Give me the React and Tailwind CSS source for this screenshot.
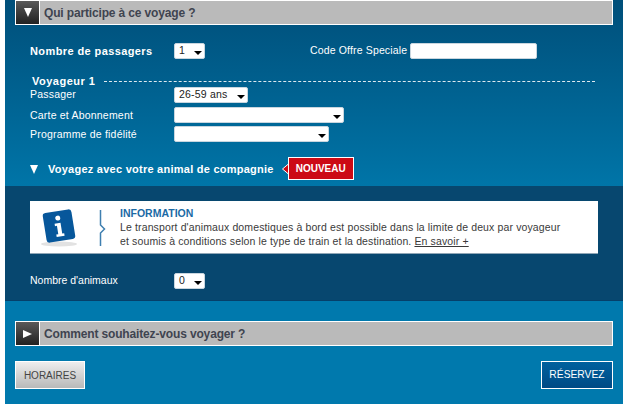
import React from 'react';

const SelectBox = ({ value, width, height = 'h-4' }) => (
  <div className={`flex items-center justify-between rounded-[2px] border border-[#c9d6df] bg-white pl-1 pr-[2px] text-[10.5px] text-[#222] ${width} ${height}`}>
    <span>{value}</span>
    <span className="mt-[3px] h-0 w-0 border-x-[4px] border-t-[4px] border-x-transparent border-t-black" />
  </div>
);

const SectionHeader = ({ title, open, className = '' }) => (
  <div className={`flex h-[25px] border border-white bg-[#bababa] ${className}`}>
    <div className="flex w-[23px] items-center justify-center bg-gradient-to-b from-[#5a5a5a] to-[#222]">
      {open ? (
        <span className="h-0 w-0 border-x-[4px] border-t-[9px] border-x-transparent border-t-white" />
      ) : (
        <span className="h-0 w-0 border-y-[4px] border-l-[9px] border-y-transparent border-l-white" />
      )}
    </div>
    <div className="w-px bg-white" />
    <div className="ml-[4px] flex items-center text-[12px] font-bold tracking-[-0.15px] text-[#3f4450]">{title}</div>
  </div>
);

const App = () => {
  return (
    <div className="h-[406px] w-[640px] bg-white font-['Liberation_Sans',sans-serif]">
      <div className="ml-[5px] flex h-[404px] w-[618px] flex-col bg-[#0079ad]">
        <div className="h-[186px] bg-gradient-to-b from-[#004f7a] to-[#0075a8] px-[10px]">
          <SectionHeader title="Qui participe à ce voyage ?" open />

          <div className="mt-[18px] flex h-4 items-center pl-[15px] text-white">
            <div className="w-[144px] text-[11px] font-bold tracking-[0.4px]">Nombre de passagers</div>
            <SelectBox value="1" width="w-[31px]" />
            <div className="ml-[105px] text-[10.5px] tracking-[0.15px]">Code Offre Speciale</div>
            <div className="ml-[3px] h-4 w-[127px] rounded-[2px] border border-[#c9d6df] bg-white" />
          </div>

          <div className="mt-[15px] flex h-[14px] items-center pl-[17px] text-white">
            <div className="w-[72px] text-[11px] font-bold tracking-[0.5px]">Voyageur 1</div>
            <div className="mr-[18px] flex-1 border-t border-dashed border-[#dfeaf0]" />
          </div>

          <div className="-mt-px flex h-4 items-center pl-[15px] text-[10.5px] tracking-[0.2px] text-white">
            <div className="w-[144px]">Passager</div>
            <SelectBox value="26-59 ans" width="w-[74px]" />
          </div>
          <div className="mt-[4px] flex h-4 items-center pl-[15px] text-[10.5px] tracking-[0.2px] text-white">
            <div className="w-[144px] translate-y-px">Carte et Abonnement</div>
            <SelectBox value="" width="w-[170px]" />
          </div>
          <div className="mt-[3px] flex h-4 items-center pl-[15px] text-[10.5px] tracking-[0.2px] text-white">
            <div className="w-[144px] translate-y-px">Programme de fidélité</div>
            <SelectBox value="" width="w-[155px]" />
          </div>

          <div className="mt-[15px] flex h-[23px] items-center pl-[15px] text-white">
            <span className="h-0 w-0 translate-y-px border-x-[4px] border-t-[9px] border-x-transparent border-t-white" />
            <span className="ml-[10px] translate-y-px text-[11px] font-bold tracking-[0.25px]">Voyagez avec votre animal de compagnie</span>
            <svg width="7" height="12" viewBox="0 0 7 12" className="ml-[8px] shrink-0">
              <path d="M7 0.5L0.5 6L7 11.5z" fill="#cc0a15" stroke="#fff" strokeWidth="1" />
            </svg>
            <span className="-ml-px flex h-[23px] w-[66px] items-center justify-center border border-white bg-[#cc0a15] text-[10px] font-bold">NOUVEAU</span>
          </div>
        </div>

        <div className="h-[115px] border-b border-[#05406a] bg-[#07476f] px-[25px] pt-[15px]">
          <div className="flex h-[52px] w-[568px] items-center bg-white shadow-[0_1px_0_#8fa6b6]">
            <svg width="90" height="52" viewBox="0 0 90 52" className="shrink-0">
              <ellipse cx="29" cy="43" rx="18" ry="2.5" fill="#e2e2e2" />
              <g transform="rotate(-9 29 25)">
                <rect x="14.5" y="10" width="29" height="30" rx="3" fill="#07579b" />
                <circle cx="29" cy="17" r="2.5" fill="#fff" />
                <path d="M25 22h6v11h2v2.5h-8V33h2v-8.500h-2z" fill="#fff" />
              </g>
              <path d="M70.500 10v15l4 4-4 4v13" fill="none" stroke="#3f7fb0" strokeWidth="1.500" transform="translate(0 -1)" />
            </svg>
            <div className="text-[10.5px] leading-[14px] tracking-[0.13px] text-[#3a3a3a]">
              <div className="text-[10.5px] font-bold tracking-normal text-[#1b6aa5]">INFORMATION</div>
              <div>Le transport d'animaux domestiques à bord est possible dans la limite de deux par voyageur</div>
              <div>
                et soumis à conditions selon le type de train et la destination. <span className="underline">En savoir +</span>
              </div>
            </div>
          </div>

          <div className="mt-[20px] flex h-4 items-center text-white">
            <div className="w-[144px] text-[10.5px]">Nombre d'animaux</div>
            <SelectBox value="0" width="w-[31px]" />
          </div>
        </div>

        <div className="px-[10px] pt-[20px]">
          <SectionHeader title="Comment souhaitez-vous voyager ?" />
          <div className="mt-[15px] flex justify-between">
            <div className="flex h-[28px] w-[70px] items-center justify-center border border-white bg-gradient-to-b from-[#eeeeee] to-[#b9b9b9] text-[10px] text-[#444]">HORAIRES</div>
            <div className="flex h-[28px] w-[72px] items-center justify-center border border-white bg-gradient-to-b from-[#00619e] to-[#004a85] text-[10.3px] text-white">RÉSERVEZ</div>
          </div>
        </div>
      </div>
    </div>
  );
};

export default App;
